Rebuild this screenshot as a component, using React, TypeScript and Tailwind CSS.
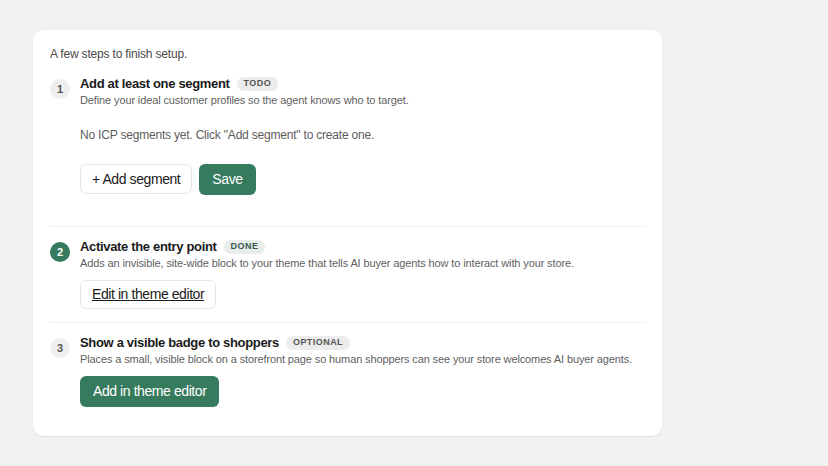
import React from "react";

function Badge({ children, tone }: { children: React.ReactNode; tone: "gray" | "green" }) {
  return (
    <span
      className={
        "inline-flex items-center h-[14px] px-[7px] rounded-full text-[9px] font-bold tracking-[0.05em] uppercase " +
        (tone === "green" ? "bg-[#e8ecea] text-[#34584a]" : "bg-[#ececec] text-[#555]")
      }
    >
      {children}
    </span>
  );
}

function StepNum({ n, done }: { n: number; done?: boolean }) {
  return (
    <div
      className={
        "w-[20px] h-[20px] rounded-full flex items-center justify-center text-[11px] font-bold shrink-0 " +
        (done ? "bg-[#367b5e] text-white" : "bg-[#efefef] text-[#555]")
      }
    >
      {n}
    </div>
  );
}

function Title({ children }: { children: React.ReactNode }) {
  return <span className="text-[13px] font-bold text-[#1a1a1a] tracking-[-0.33px]">{children}</span>;
}

function Desc({ children }: { children: React.ReactNode }) {
  return <div className="text-[11px] text-[#5f5f5f] leading-[17px] tracking-[-0.12px]">{children}</div>;
}

export default function App() {
  return (
    <div
      className="min-h-[466px] w-full bg-[#f1f1f1] pt-[30px] pl-[33px]"
      style={{ fontFamily: '"Liberation Sans", Arial, sans-serif' }}
    >
      <div className="w-[629px] bg-white rounded-[10px] px-[17px] pt-[16px] pb-[29px] shadow-[0_1px_0_rgba(0,0,0,0.07)]">
        <div className="text-[12px] text-[#4a4a4a] leading-[16px] tracking-[-0.18px]">A few steps to finish setup.</div>

        {/* Step 1 */}
        <div className="flex gap-[10px] mt-[14px]">
          <div className="pt-[3px]">
            <StepNum n={1} />
          </div>
          <div className="flex-1">
            <div className="flex items-center gap-[7px] h-[16px]">
              <Title>Add at least one segment</Title>
              <Badge tone="gray">Todo</Badge>
            </div>
            <Desc>Define your ideal customer profiles so the agent knows who to target.</Desc>
            <div className="text-[12px] text-[#5c5c5c] mt-[18px] leading-[16px] tracking-[-0.2px]">
              No ICP segments yet. Click "Add segment" to create one.
            </div>
            <div className="flex gap-[7px] mt-[21px]">
              <button className="h-[30px] px-[11px] rounded-[6px] border border-[#e6e6e6] bg-white text-[14px] text-[#1a1a1a] tracking-[-0.42px]">
                + Add segment
              </button>
              <button className="h-[31px] px-[13px] rounded-[6px] bg-[#367b5e] text-[14px] text-white tracking-[-0.42px]">
                Save
              </button>
            </div>
          </div>
        </div>

        <div className="h-px bg-[#f0f0f0] mt-[31px]" />

        {/* Step 2 */}
        <div className="flex gap-[10px] mt-[12px]">
          <div className="pt-[3px]">
            <StepNum n={2} done />
          </div>
          <div className="flex-1">
            <div className="flex items-center gap-[7px] h-[16px]">
              <Title>Activate the entry point</Title>
              <Badge tone="green">Done</Badge>
            </div>
            <Desc>Adds an invisible, site-wide block to your theme that tells AI buyer agents how to interact with your store.</Desc>
            <div className="flex mt-[8px]">
              <button className="h-[29px] px-[11px] rounded-[6px] border border-[#e6e6e6] bg-white text-[14px] text-[#1a1a1a] underline tracking-[-0.42px]">
                Edit in theme editor
              </button>
            </div>
          </div>
        </div>

        <div className="h-px bg-[#f0f0f0] mt-[13px]" />

        {/* Step 3 */}
        <div className="flex gap-[10px] mt-[12px]">
          <div className="pt-[3px]">
            <StepNum n={3} />
          </div>
          <div className="flex-1">
            <div className="flex items-center gap-[7px] h-[16px]">
              <Title>Show a visible badge to shoppers</Title>
              <Badge tone="gray">Optional</Badge>
            </div>
            <Desc>
              Places a small, visible block on a storefront page so human shoppers can see your store welcomes AI buyer agents.
            </Desc>
            <div className="flex mt-[8px]">
              <button className="h-[31px] px-[13px] rounded-[6px] bg-[#367b5e] text-[14px] text-white tracking-[-0.42px]">
                Add in theme editor
              </button>
            </div>
          </div>
        </div>
      </div>
    </div>
  );
}
